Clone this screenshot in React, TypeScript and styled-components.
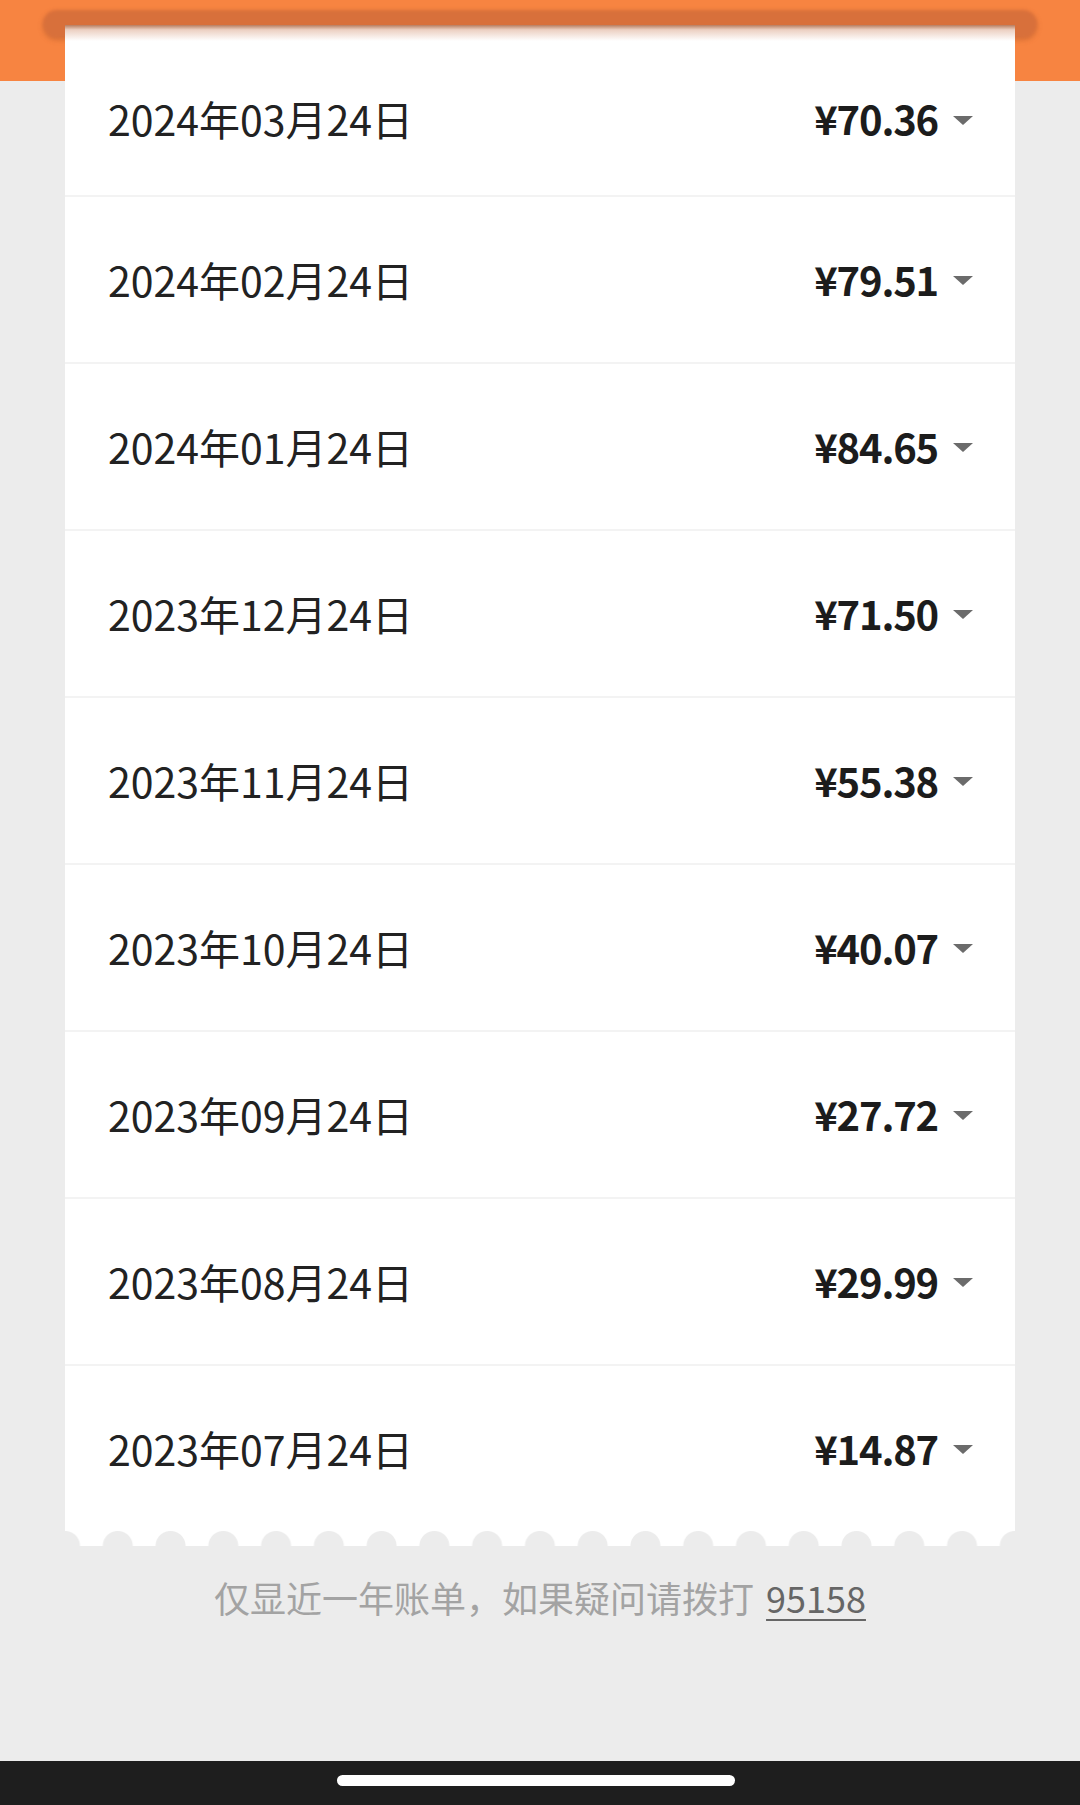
import React from "react";
import styled, { createGlobalStyle } from "styled-components";

const GlobalStyle = createGlobalStyle`
  html, body {
    margin: 0;
    padding: 0;
    background: #ececec;
  }
  body {
    font-family: "Noto Sans CJK SC", "Noto Sans", sans-serif;
  }
  #root {
    min-height: 100vh;
  }
`;

const Page = styled.div`
  min-height: 100vh;
  display: flex;
  flex-direction: column;
  background: #ececec;
`;

const Header = styled.header`
  height: 81px;
  background: #f78441;
  padding: 10px 43px 0;
  box-sizing: border-box;
`;

const Slot = styled.div`
  height: 28px;
  border-radius: 14px;
  background: #d8703b;
  filter: blur(1.5px);
  box-shadow: 0 2px 4px rgba(150, 70, 30, 0.35);
`;

const Card = styled.section`
  position: relative;
  z-index: 1;
  margin: -56px 65px 0;
  background: #ffffff;
  display: flex;
  flex-direction: column;

  &::before {
    content: "";
    position: absolute;
    left: 0;
    right: 0;
    top: 0;
    height: 16px;
    background: linear-gradient(
      to bottom,
      rgba(160, 80, 40, 0.75) 0%,
      rgba(200, 120, 80, 0.35) 30%,
      rgba(255, 255, 255, 0) 100%
    );
    pointer-events: none;
  }
`;

const Row = styled.div<{ $first?: boolean }>`
  height: ${(p) => (p.$first ? "170px" : "167px")};
  padding: ${(p) => (p.$first ? "18px 42px 2px 43px" : "0 42px 2px 43px")};
  box-sizing: border-box;
  display: flex;
  align-items: center;
  justify-content: space-between;
  border-top: ${(p) => (p.$first ? "none" : "2px solid #f3f3f3")};
`;

const DateText = styled.span`
  font-size: 41px;
  color: #222222;
  font-weight: 400;
`;

const Amount = styled.div`
  display: flex;
  align-items: center;
  gap: 15px;
`;

const Money = styled.span`
  font-size: 40px;
  font-weight: 700;
  color: #1c1c1c;
  letter-spacing: -1.2px;
`;

const Caret = styled.span`
  width: 0;
  height: 0;
  border-left: 10px solid transparent;
  border-right: 10px solid transparent;
  border-top: 9px solid #6b6b6b;
  margin-top: 4px;
`;

const Scallop = styled.div`
  height: 15px;
  background-color: #ffffff;
  background-image: radial-gradient(
    circle at 50% 100%,
    #ececec 14.5px,
    rgba(236, 236, 236, 0) 15.5px
  );
  background-size: calc(100% / 18) 15px;
  background-repeat: repeat-x;
  background-position: -26.39px 0;
  margin-bottom: -1px;
`;

const Footer = styled.p`
  margin: 27px 0 0;
  text-align: center;
  font-size: 36px;
  line-height: 50px;
  color: #a3a3a3;
`;

const Phone = styled.span`
  color: #666666;
  text-decoration: underline;
  text-decoration-thickness: 2px;
  text-underline-offset: 6px;
  margin-left: 12px;
`;

const NavBar = styled.div`
  margin-top: auto;
  height: 44px;
  background: #1e1e1e;
  display: flex;
  justify-content: center;
  padding-top: 14px;
  box-sizing: border-box;
`;

const HomeIndicator = styled.div`
  width: 398px;
  height: 11px;
  border-radius: 6px;
  background: #ffffff;
  margin-right: 8px;
`;

const bills = [
  { date: "2024年03月24日", amount: "¥70.36" },
  { date: "2024年02月24日", amount: "¥79.51" },
  { date: "2024年01月24日", amount: "¥84.65" },
  { date: "2023年12月24日", amount: "¥71.50" },
  { date: "2023年11月24日", amount: "¥55.38" },
  { date: "2023年10月24日", amount: "¥40.07" },
  { date: "2023年09月24日", amount: "¥27.72" },
  { date: "2023年08月24日", amount: "¥29.99" },
  { date: "2023年07月24日", amount: "¥14.87" },
];

export default function App() {
  return (
    <Page>
      <GlobalStyle />
      <Header>
        <Slot />
      </Header>
      <Card>
        {bills.map((b, i) => (
          <Row key={b.date} $first={i === 0}>
            <DateText>{b.date}</DateText>
            <Amount>
              <Money>{b.amount}</Money>
              <Caret />
            </Amount>
          </Row>
        ))}
        <Scallop />
      </Card>
      <Footer>
        仅显近一年账单，如果疑问请拨打<Phone>95158</Phone>
      </Footer>
      <NavBar>
        <HomeIndicator />
      </NavBar>
    </Page>
  );
}
